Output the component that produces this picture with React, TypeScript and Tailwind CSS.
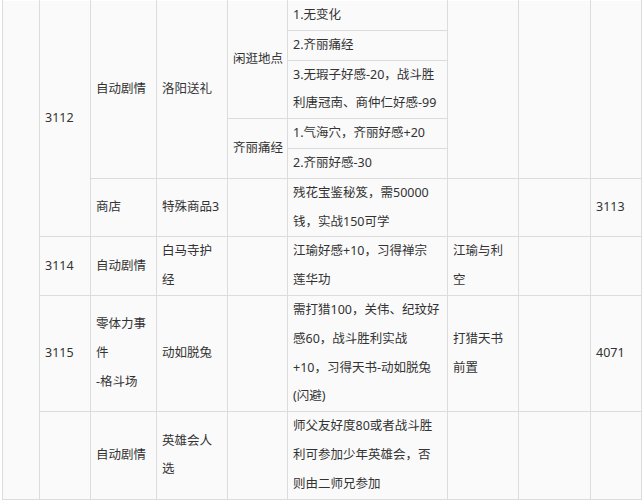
import React from "react"

const td = "border border-[#dcdcdc] bg-[#fafafa] px-[5px] py-0 align-middle whitespace-nowrap overflow-hidden"
const tdTop = td + " border-t-transparent"

function Lines({ lines }: { lines: string[] }) {
  return (
    <>
      {lines.map((l, i) => (
        <React.Fragment key={i}>
          {i > 0 && <br />}
          {l}
        </React.Fragment>
      ))}
    </>
  )
}

export default function App() {
  return (
    <div className="min-h-[500px] w-[644px] overflow-hidden bg-white">
      <table
        className="ml-[2px] table-fixed border-collapse text-[12.5px] leading-[28.8px] text-[#333]"
        style={{ fontFamily: '"Noto Sans", "Noto Sans CJK SC", sans-serif', width: 639 }}
      >
        <colgroup>
          <col style={{ width: 37 }} />
          <col style={{ width: 51 }} />
          <col style={{ width: 66 }} />
          <col style={{ width: 71 }} />
          <col style={{ width: 60 }} />
          <col style={{ width: 160 }} />
          <col style={{ width: 71 }} />
          <col style={{ width: 72 }} />
          <col style={{ width: 51 }} />
        </colgroup>
        <tbody>
          {/* 3112 */}
          <tr>
            <td className={tdTop} rowSpan={9}></td>
            <td className={tdTop} rowSpan={6}>3112</td>
            <td className={tdTop} rowSpan={5}>自动剧情</td>
            <td className={tdTop} rowSpan={5}>洛阳送礼</td>
            <td className={tdTop} rowSpan={3}>闲逛地点</td>
            <td className={tdTop}>1.无变化</td>
            <td className={tdTop} rowSpan={5}></td>
            <td className={tdTop} rowSpan={5}></td>
            <td className={tdTop} rowSpan={5}></td>
          </tr>
          <tr>
            <td className={td}>2.齐丽痛经</td>
          </tr>
          <tr>
            <td className={td}>
              <Lines lines={["3.无瑕子好感-20，战斗胜", "利唐冠南、商仲仁好感-99"]} />
            </td>
          </tr>
          <tr>
            <td className={td} rowSpan={2}>齐丽痛经</td>
            <td className={td}>1.气海穴，齐丽好感+20</td>
          </tr>
          <tr>
            <td className={td}>2.齐丽好感-30</td>
          </tr>
          <tr>
            <td className={td}>商店</td>
            <td className={td}>特殊商品3</td>
            <td className={td}></td>
            <td className={td}>
              <Lines lines={["残花宝鉴秘笈，需50000", "钱，实战150可学"]} />
            </td>
            <td className={td}></td>
            <td className={td}></td>
            <td className={td}>3113</td>
          </tr>

          {/* 3114 */}
          <tr>
            <td className={td}>3114</td>
            <td className={td}>自动剧情</td>
            <td className={td}>
              <Lines lines={["白马寺护", "经"]} />
            </td>
            <td className={td}></td>
            <td className={td}>
              <Lines lines={["江瑜好感+10，习得禅宗", "莲华功"]} />
            </td>
            <td className={td}>
              <Lines lines={["江瑜与利", "空"]} />
            </td>
            <td className={td}></td>
            <td className={td}></td>
          </tr>

          {/* 3115 */}
          <tr>
            <td className={td}>3115</td>
            <td className={td}>
              <Lines lines={["零体力事", "件", "-格斗场"]} />
            </td>
            <td className={td}>动如脱兔</td>
            <td className={td}></td>
            <td className={td}>
              <Lines
                lines={["需打猎100，关伟、纪玟好", "感60，战斗胜利实战", "+10，习得天书-动如脱兔", "(闪避)"]}
              />
            </td>
            <td className={td}>
              <Lines lines={["打猎天书", "前置"]} />
            </td>
            <td className={td}></td>
            <td className={td}>4071</td>
          </tr>

          <tr>
            <td className={td}></td>
            <td className={td}>自动剧情</td>
            <td className={td}>
              <Lines lines={["英雄会人", "选"]} />
            </td>
            <td className={td}></td>
            <td className={td}>
              <Lines lines={["师父友好度80或者战斗胜", "利可参加少年英雄会，否", "则由二师兄参加"]} />
            </td>
            <td className={td}></td>
            <td className={td}></td>
            <td className={td}></td>
          </tr>
        </tbody>
      </table>
    </div>
  )
}
